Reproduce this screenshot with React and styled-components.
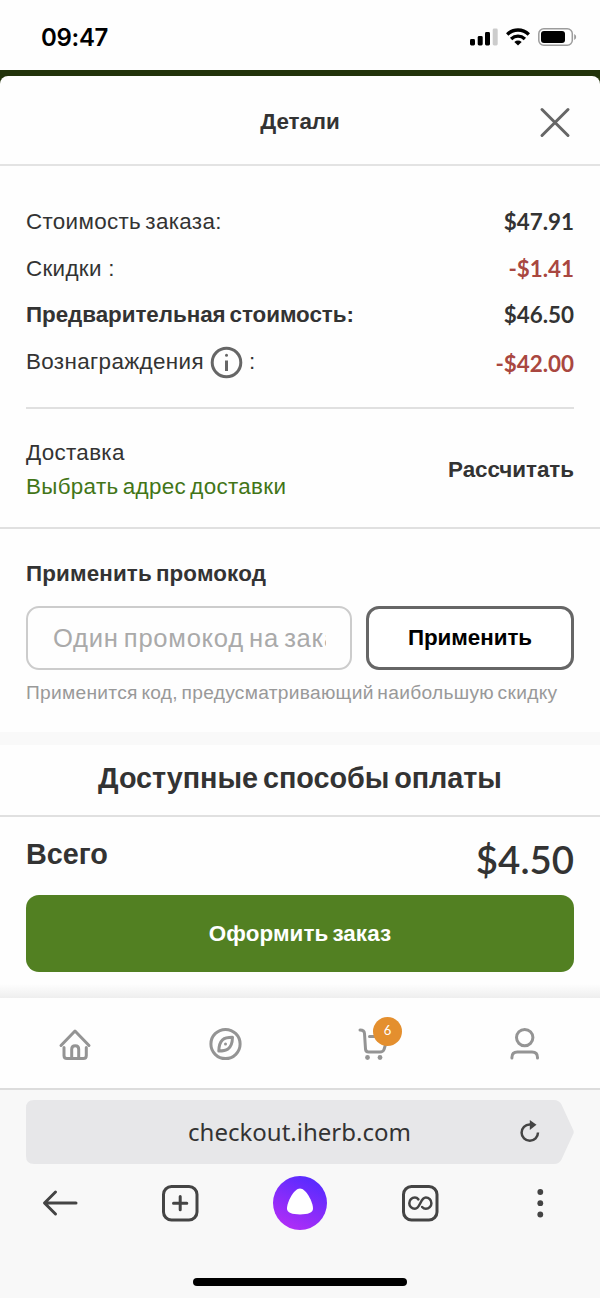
import React from "react";
import styled, { createGlobalStyle } from "styled-components";

const GlobalStyle = createGlobalStyle`
  * {
    box-sizing: border-box;
  }
  body {
    margin: 0;
    background: #fefefe;
    color: #333;
    font-family: "Liberation Sans", Arial, sans-serif;
    font-size: 22.4px;
  }
  svg {
    display: block;
    flex: none;
  }
`;

const Screen = styled.div`
  width: 600px;
  height: 1298px;
  display: flex;
  flex-direction: column;
  overflow: hidden;
`;

const StatusBar = styled.header`
  height: 70px;
  padding: 4px 23px 0 41px;
  display: flex;
  align-items: center;
  justify-content: space-between;
`;

const Time = styled.span`
  font-family: Inter, sans-serif;
  font-size: 24px;
  font-weight: 600;
  letter-spacing: -0.3px;
  color: #000;
`;

const StatusIcons = styled.div`
  display: flex;
  align-items: center;
  gap: 8px;
`;

const Backdrop = styled.div`
  background: #22330b;
  padding-top: 6px;
`;

const SheetHeader = styled.div`
  height: 90px;
  padding-top: 4px;
  display: grid;
  grid-template-columns: 90px 1fr 90px;
  align-items: center;
  justify-items: center;
  background: #fefefe;
  border-bottom: 2px solid #e3e3e3;
  border-radius: 8px 8px 0 0;
`;

const Text = styled.span`
  font-size: ${(props) => props.$size || 22.4}px;
  font-weight: ${(props) => (props.$bold ? 700 : 400)};
  line-height: ${(props) => props.$line || 34}px;
  letter-spacing: ${(props) => props.$track ?? (props.$bold ? -0.002 : 0.0145)}em;
  word-spacing: ${(props) => props.$word ?? -0.1}em;
  color: ${(props) => props.$color || "#333"};
  white-space: nowrap;
`;

const Price = styled(Text)`
  font-family: Lato, sans-serif;
  font-weight: 700;
  letter-spacing: 0;
`;

const Summary = styled.section`
  margin: 0 26px;
  padding-top: 33px;
  height: 243px;
  border-bottom: 2px solid #e0e0e0;
`;

const Row = styled.div`
  height: 46.5px;
  display: flex;
  align-items: center;
  justify-content: space-between;
`;

const Label = styled.div`
  display: flex;
  align-items: center;
  gap: 6px;

  svg {
    margin-top: 2px;
  }
`;

const RewardPrice = styled(Price)`
  padding-top: 4px;
`;

const Delivery = styled.section`
  height: 120px;
  padding: 3px 26px 0;
  display: flex;
  align-items: center;
  justify-content: space-between;
  border-bottom: 2px solid #e0e0e0;
`;

const Stack = styled.div`
  display: flex;
  flex-direction: column;
`;

const Promo = styled.section`
  height: 203px;
  padding: 28px 26px 0;
  display: flex;
  flex-direction: column;
`;

const PromoForm = styled.div`
  margin: 15px 0 6px;
  display: flex;
  gap: 14px;
`;

const PromoInput = styled.div`
  width: 326px;
  height: 64px;
  padding: 0 24px 0 25px;
  display: flex;
  align-items: center;
  border: 2px solid #ccc;
  border-radius: 13px;
`;

const Clip = styled.div`
  width: 100%;
  overflow: hidden;
`;

const ApplyButton = styled.button`
  width: 208px;
  height: 64px;
  padding: 0;
  border: 3px solid #666;
  border-radius: 13px;
  background: #fff;
  font-family: inherit;
`;

const Band = styled.div`
  height: 13px;
  background: #f9f9f9;
`;

const PayTitle = styled.section`
  height: 72px;
  padding-bottom: 5px;
  display: flex;
  align-items: center;
  justify-content: center;
  border-bottom: 2px solid #e0e0e0;
`;

const Checkout = styled.section`
  height: 181px;
  padding: 17px 26px 0;
  background: linear-gradient(#fefefe 0 167px, #eeeeee 100%);
`;

const Total = styled.div`
  height: 61px;
  display: flex;
  justify-content: space-between;
`;

const TotalPrice = styled(Price)`
  padding-top: 4px;
  font-weight: 600;
`;

const OrderButton = styled.button`
  width: 100%;
  height: 77px;
  padding: 0;
  border: 0;
  border-radius: 13px;
  background: #528022;
  font-family: inherit;
`;

const TabBar = styled.nav`
  height: 92px;
  display: grid;
  grid-template-columns: repeat(4, 1fr);
  align-items: center;
  justify-items: center;
  padding-top: 2px;
  background: #fefefe;
  border-bottom: 2px solid #dcdcdc;
`;

const CartTab = styled.div`
  position: relative;
`;

const Badge = styled.span`
  position: absolute;
  left: 18px;
  top: -7px;
  width: 29px;
  height: 29px;
  border-radius: 50%;
  background: #e48f2e;
  color: #fff;
  font-family: Lato, sans-serif;
  font-size: 13px;
  line-height: 27px;
  text-align: center;
`;

const Browser = styled.footer`
  flex: 1;
  padding: 10px 0 12px;
  display: flex;
  flex-direction: column;
  align-items: center;
  background: #f8f8f8;
`;

const AddressBar = styled.div`
  width: 548px;
  height: 64px;
  padding: 0 34px 0 102px;
  display: grid;
  grid-template-columns: 1fr 20px;
  gap: 49px;
  align-items: center;
  justify-items: center;
  background: #e7e7e9;
  clip-path: path("M8 0H528Q533 0 535.5 4.5L547 29.5Q548.5 32 547 34.5L535.5 59.5Q533 64 528 64H8Q0 64 0 56V8Q0 0 8 0Z");
`;

const Url = styled(Text)`
  font-family: "Noto Sans", sans-serif;
  letter-spacing: 0;
`;

const Toolbar = styled.div`
  width: 600px;
  height: 77px;
  display: grid;
  grid-template-columns: repeat(5, 120px);
  align-items: center;
  justify-items: center;
`;

const HomeIndicator = styled.div`
  width: 214px;
  height: 8px;
  margin-top: auto;
  border-radius: 4px;
  background: #000;
`;

function Line({ size = 40, width = 3, color = "#949494", children }) {
  return (
    <svg
      width={size}
      height={size}
      viewBox={`0 0 ${size} ${size}`}
      fill="none"
      stroke={color}
      strokeWidth={width}
      strokeLinecap="round"
      strokeLinejoin="round"
    >
      {children}
    </svg>
  );
}

function Signal() {
  return (
    <svg width="28" height="18" viewBox="0 0 28 18">
      <rect x="0" y="11" width="5" height="6.5" rx="1.4" />
      <rect x="7.7" y="8" width="5" height="9.5" rx="1.4" />
      <rect x="15" y="4" width="5" height="13.5" rx="1.4" />
      <rect x="22.7" y="0.5" width="5" height="17" rx="1.4" fill="#ccc" />
    </svg>
  );
}

function Wifi() {
  return (
    <svg width="24" height="18" viewBox="0 0 24 18" fill="none" stroke="#000" strokeWidth="3.4">
      <path d="M1.2 6.4C7.4 0.6 16.6 0.6 22.8 6.4" />
      <path d="M5.1 10.9C9.2 7.2 14.8 7.2 18.9 10.9" />
      <path d="M12 17.4L8.3 13.9Q12 11 15.7 13.9Z" fill="#000" stroke="none" />
    </svg>
  );
}

function Battery() {
  return (
    <svg width="39" height="18" viewBox="0 0 39 18">
      <rect x="0.8" y="0.8" width="33.5" height="16.4" rx="5" fill="none" stroke="#9c9c9c" strokeWidth="1.5" />
      <rect x="3" y="3" width="24" height="12" rx="3" />
      <path d="M36.2 6V12Q38.2 11 38.2 9Q38.2 7 36.2 6Z" fill="#9c9c9c" />
    </svg>
  );
}

const rows = [
  { label: "Стоимость заказа:", price: "$47.91" },
  { label: "Скидки :", price: "-$1.41", minus: true, word: 0 },
  { label: "Предварительная стоимость:", price: "$46.50", bold: true },
];

function App() {
  return (
    <Screen>
      <GlobalStyle />
      <StatusBar>
        <Time>09:47</Time>
        <StatusIcons>
          <Signal />
          <Wifi />
          <Battery />
        </StatusIcons>
      </StatusBar>

      <Backdrop>
        <SheetHeader>
          <span />
          <Text $bold>Детали</Text>
          <Line width={3} color="#666" size={40}>
            <path d="M7 7.5L33 33.5M33 7.5L7 33.5" />
          </Line>
        </SheetHeader>
      </Backdrop>

      <Summary>
        {rows.map((row) => (
          <Row key={row.label}>
            <Text $bold={row.bold} $word={row.word}>{row.label}</Text>
            <Price $color={row.minus && "#a94740"}>{row.price}</Price>
          </Row>
        ))}
        <Row>
          <Label>
            <Text $track={0.0165}>Вознаграждения</Text>
            <Line size={33} width={3} color="#666">
              <circle cx="16.5" cy="16.5" r="14.3" />
              <path d="M16.5 14.5V25" strokeLinecap="butt" />
              <path d="M16.5 9.2V9.3" />
            </Line>
            <Text>:</Text>
          </Label>
          <RewardPrice $color="#a94740">-$42.00</RewardPrice>
        </Row>
      </Summary>

      <Delivery>
        <Stack>
          <Text>Доставка</Text>
          <Text $color="#427517">Выбрать адрес доставки</Text>
        </Stack>
        <Text $bold>Рассчитать</Text>
      </Delivery>

      <Promo>
        <Text $bold $track={0.006}>Применить промокод</Text>
        <PromoForm>
          <PromoInput>
            <Clip>
              <Text $size={25.6} $track={0.028} $color="#aaa">Один промокод на заказ</Text>
            </Clip>
          </PromoInput>
          <ApplyButton>
            <Text $bold $color="#000">Применить</Text>
          </ApplyButton>
        </PromoForm>
        <Text $size={19.2} $color="#999">Применится код, предусматривающий наибольшую скидку</Text>
      </Promo>
      <Band />

      <PayTitle>
        <Text $bold $size={28.8}>Доступные способы оплаты</Text>
      </PayTitle>

      <Checkout>
        <Total>
          <Text $bold $size={28.8} $line={40}>Всего</Text>
          <TotalPrice $size={38.4} $line={42}>$4.50</TotalPrice>
        </Total>
        <OrderButton>
          <Text $bold $color="#fff" $track={0.004}>Оформить заказ</Text>
        </OrderButton>
      </Checkout>

      <TabBar>
        <Line>
          <path d="M6 21.5L20 7L34 21.5" />
          <path d="M9 23.5V31.5Q9 34.5 12 34.5H28.3Q31.3 34.5 31.3 31.5V23.5" />
          <path d="M16.7 34V25.3Q16.7 21.8 20.2 21.8Q23.7 21.8 23.7 25.3V34" />
        </Line>
        <Line>
          <circle cx="20.5" cy="20" r="14.6" />
          <path d="M27.5 13.3Q27.3 22 23 25Q20 27 13.8 27Q14 19 17.5 15.8Q20.5 13.3 27.5 13.3Z" />
          <circle cx="20.5" cy="20" r="1.5" fill="#949494" stroke="none" />
        </Line>
        <CartTab>
          <Line>
            <path d="M5 6Q9.3 6 9.5 9.5L10.5 25Q10.8 28 13.5 28H25Q28 28 29 25.5L33 12.5H14.5" />
            <circle cx="12.5" cy="33.5" r="2.4" fill="#949494" stroke="none" />
            <circle cx="25" cy="33.5" r="2.4" fill="#949494" stroke="none" />
          </Line>
          <Badge>6</Badge>
        </CartTab>
        <Line>
          <circle cx="19.7" cy="13.6" r="8.2" />
          <path d="M6.9 34V33.5Q6.9 28 12.4 28H27Q32.5 28 32.5 33.5V34" />
        </Line>
      </TabBar>

      <Browser>
        <AddressBar>
          <Url $size={24}>checkout.iherb.com</Url>
          <svg width="20" height="24" viewBox="0 0 20 24" fill="none" stroke="#444" strokeWidth="2.5">
            <path d="M11 4.4H9.7A8.2 8.2 0 1 0 18 12.6" />
            <path d="M9.8 0L16.5 4.7L9.8 10Z" fill="#444" stroke="none" />
          </svg>
        </AddressBar>
        <Toolbar>
          <Line color="#444">
            <path d="M36 20H5M15.5 9L4.5 20L15.5 31" />
          </Line>
          <Line color="#444">
            <rect x="3.5" y="3.5" width="33.5" height="33.5" rx="8" />
            <path d="M20.2 13.5V26.8M13.5 20.2H26.8" />
          </Line>
          <svg width="54" height="54" viewBox="0 0 54 54">
            <defs>
              <linearGradient id="orb" x1="0.2" y1="1" x2="0.7" y2="0">
                <stop offset="0" stopColor="#b52df6" />
                <stop offset="1" stopColor="#552bff" />
              </linearGradient>
            </defs>
            <circle cx="27" cy="27" r="27" fill="url(#orb)" />
            <path
              d="M27 12.5C33 12.5 40 26 40 32.5C40 36.8 35 38.4 27 38.4C19 38.4 14 36.8 14 32.5C14 26 21 12.5 27 12.5Z"
              fill="#fff"
            />
          </svg>
          <Line color="#444">
            <rect x="3.5" y="3.5" width="33.5" height="33.5" rx="8" />
            <path
              d="M18.4 16.4C17.4 15.2 16.3 14.6 14.9 14.6A5.6 5.6 0 0 0 14.9 25.8C20.3 25.8 20.3 14.6 25.8 14.6A5.6 5.6 0 0 1 25.8 25.8C24.3 25.8 23.1 25.1 22.1 24"
              strokeWidth="2.5"
            />
          </Line>
          <Line color="#444">
            <g fill="#444" stroke="none">
              <circle cx="20.3" cy="9" r="2.9" />
              <circle cx="20.3" cy="20.2" r="2.9" />
              <circle cx="20.3" cy="31.5" r="2.9" />
            </g>
          </Line>
        </Toolbar>
        <HomeIndicator />
      </Browser>
    </Screen>
  );
}

export default App;
